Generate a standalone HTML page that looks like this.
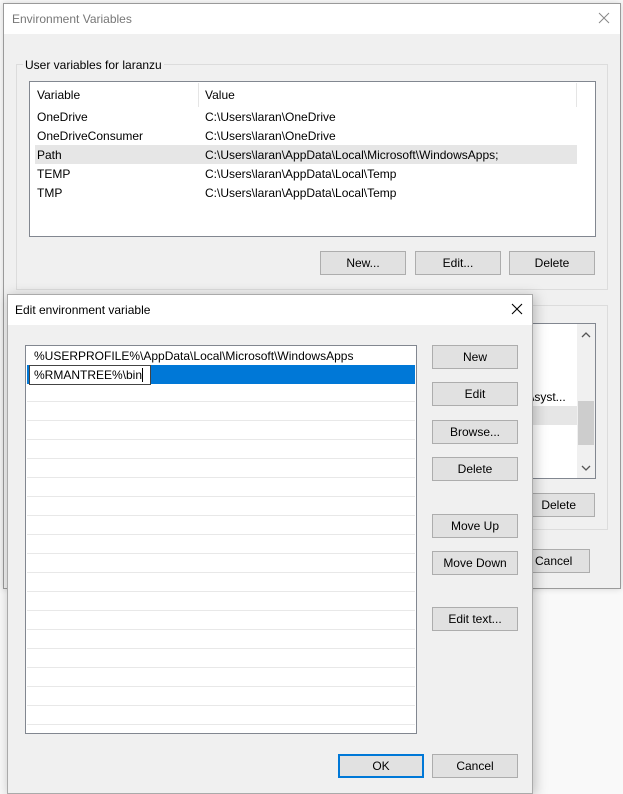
<!DOCTYPE html>
<html><head><meta charset="utf-8"><style>
*{box-sizing:border-box;margin:0;padding:0}
body{width:623px;height:792px;position:relative;overflow:hidden;background:#f9f9f9;font-family:"Liberation Sans",sans-serif;font-size:12px;color:#000}
.a{position:absolute}
.btn{position:absolute;background:#e1e1e1;border:1px solid #adadad;text-align:center;line-height:22px;font-size:12px}
.t{position:absolute;white-space:nowrap;font-size:12px;line-height:14px}
</style></head><body>
<div class="a" style="left:3px;top:3px;width:618px;height:586px;background:#f0f0f0;border:1px solid #9a9a9a;box-shadow:0 0 6px rgba(0,0,0,.15)"></div>
<div class="a" style="left:4px;top:4px;width:616px;height:30px;background:#fff"></div>
<div class="t" style="left:12px;top:12px;color:#777">Environment Variables</div>
<svg class="a" style="left:598px;top:12px" width="12" height="12"><path d="M1 1L11 11M11 1L1 11" stroke="#888" stroke-width="1"/></svg>
<div class="a" style="left:16px;top:64px;width:592px;height:226px;border:1px solid #dcdcdc"></div>
<div class="t" style="left:23px;top:58px;background:#f0f0f0;padding:0 2px">User variables for laranzu</div>
<div class="a" style="left:29px;top:81px;width:567px;height:156px;background:#fff;border:1px solid #828790"></div>
<div class="a" style="left:198px;top:83px;width:1px;height:24px;background:#e5e5e5"></div>
<div class="a" style="left:576px;top:83px;width:1px;height:24px;background:#e5e5e5"></div>
<div class="t" style="left:37px;top:88px">Variable</div><div class="t" style="left:205px;top:88px">Value</div>
<div class="a" style="left:35px;top:145px;width:542px;height:19px;background:#e6e6e6"></div>
<div class="t" style="left:37px;top:110px">OneDrive</div><div class="t" style="left:205px;top:110px">C:\Users\laran\OneDrive</div>
<div class="t" style="left:37px;top:129px">OneDriveConsumer</div><div class="t" style="left:205px;top:129px">C:\Users\laran\OneDrive</div>
<div class="t" style="left:37px;top:148px">Path</div><div class="t" style="left:205px;top:148px">C:\Users\laran\AppData\Local\Microsoft\WindowsApps;</div>
<div class="t" style="left:37px;top:167px">TEMP</div><div class="t" style="left:205px;top:167px">C:\Users\laran\AppData\Local\Temp</div>
<div class="t" style="left:37px;top:186px">TMP</div><div class="t" style="left:205px;top:186px">C:\Users\laran\AppData\Local\Temp</div>
<div class="btn" style="left:320px;top:251px;width:86px;height:24px">New...</div>
<div class="btn" style="left:415px;top:251px;width:86px;height:24px">Edit...</div>
<div class="btn" style="left:509px;top:251px;width:86px;height:24px">Delete</div>
<div class="a" style="left:16px;top:305px;width:592px;height:225px;border:1px solid #dcdcdc"></div>
<div class="a" style="left:29px;top:323px;width:567px;height:156px;background:#fff;border:1px solid #828790"></div>
<div class="a" style="left:35px;top:406px;width:542px;height:19px;background:#e6e6e6"></div>
<div class="t" style="left:531px;top:390px">\syst...</div>
<div class="a" style="left:577px;top:324px;width:18px;height:154px;background:#f0f0f0"></div>
<div class="a" style="left:578px;top:401px;width:16px;height:44px;background:#cdcdcd"></div>
<svg class="a" style="left:581px;top:331px" width="10" height="8"><path d="M1 6L5 2L9 6" stroke="#555" fill="none" stroke-width="1.3"/></svg>
<svg class="a" style="left:581px;top:464px" width="10" height="8"><path d="M1 2L5 6L9 2" stroke="#555" fill="none" stroke-width="1.3"/></svg>
<div class="btn" style="left:509px;top:493px;width:86px;height:24px">&nbsp;&nbsp;&nbsp;&nbsp;Delete</div>
<div class="btn" style="left:504px;top:549px;width:86px;height:24px">&nbsp;&nbsp;&nbsp;&nbsp;Cancel</div>
<div class="a" style="left:7px;top:294px;width:526px;height:500px;background:#f0f0f0;border:1px solid #aaa;box-shadow:2px 2px 12px rgba(0,0,0,.25)"></div>
<div class="a" style="left:8px;top:295px;width:524px;height:30px;background:#fff"></div>
<div class="t" style="left:15px;top:303px">Edit environment variable</div>
<svg class="a" style="left:511px;top:303px" width="12" height="12"><path d="M1 1L11 11M11 1L1 11" stroke="#000" stroke-width="1.1"/></svg>
<div class="a" style="left:25px;top:345px;width:392px;height:389px;background:#fff;border:1px solid #828790;overflow:hidden">
<div style="position:absolute;left:1px;top:-1px;width:388px;height:400px;background:repeating-linear-gradient(to bottom,transparent 0,transparent 18px,#e8e8e8 18px,#e8e8e8 19px)"></div>
<div class="a" style="left:0;top:0;width:390px;height:19px;background:#fff"></div>
<div class="a" style="left:1px;top:19px;width:388px;height:19px;background:#0078d7"></div>
</div>
<div class="t" style="left:34px;top:349px">%USERPROFILE%\AppData\Local\Microsoft\WindowsApps</div>
<div class="a" style="left:29px;top:365px;width:122px;height:20px;background:#fff;border:1px solid #444"></div>
<div class="t" style="left:34px;top:368px">%RMANTREE%\bin</div>
<div class="a" style="left:142px;top:368px;width:1px;height:14px;background:#000"></div>
<div class="btn" style="left:432px;top:345px;width:86px;height:24px">New</div>
<div class="btn" style="left:432px;top:382px;width:86px;height:24px">Edit</div>
<div class="btn" style="left:432px;top:420px;width:86px;height:24px">Browse...</div>
<div class="btn" style="left:432px;top:457px;width:86px;height:24px">Delete</div>
<div class="btn" style="left:432px;top:514px;width:86px;height:24px">Move Up</div>
<div class="btn" style="left:432px;top:551px;width:86px;height:24px">Move Down</div>
<div class="btn" style="left:432px;top:607px;width:86px;height:24px">Edit text...</div>
<div class="btn" style="left:338px;top:754px;width:86px;height:24px;border:2px solid #0078d7;line-height:20px">OK</div>
<div class="btn" style="left:432px;top:754px;width:86px;height:24px">Cancel</div>
</body></html>
